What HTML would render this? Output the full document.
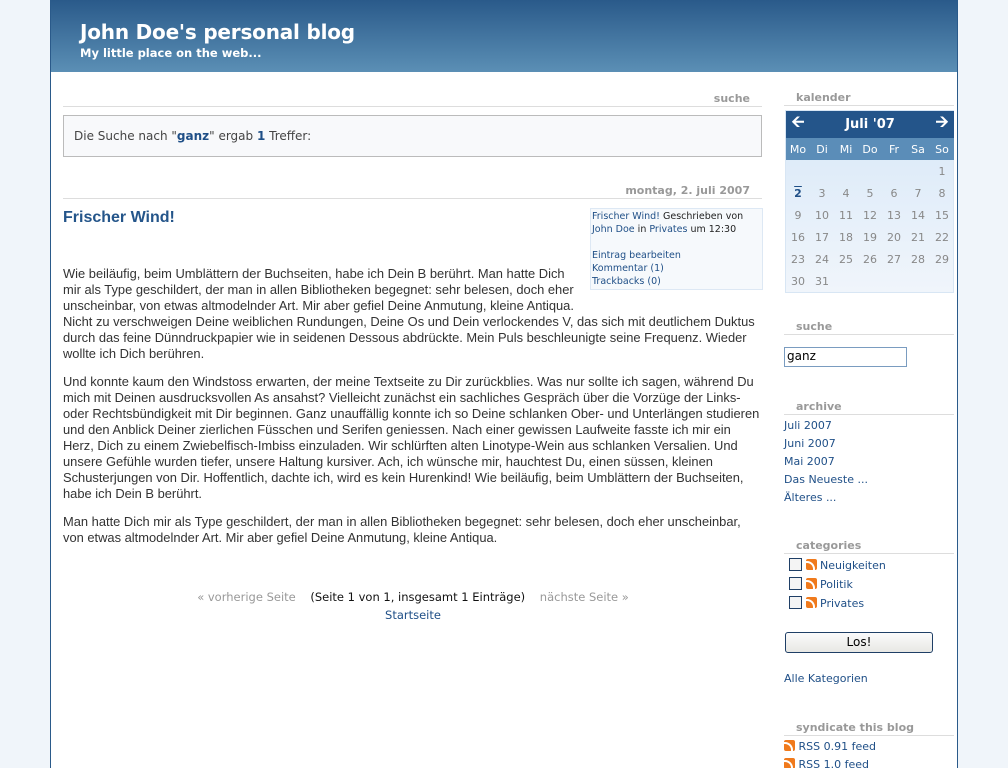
<!DOCTYPE html>
<html><head><meta charset="utf-8"><style>
*{margin:0;padding:0;box-sizing:border-box}
html,body{width:1008px;height:768px;overflow:hidden}
body{background:#f0f5fa;font-family:"DejaVu Sans","Liberation Sans",sans-serif;font-size:11px;color:#333;position:relative}
#wrap{position:absolute;left:50px;top:0;width:908px;height:768px;background:#fff;border-left:1px solid #2a5a8a;border-right:1px solid #2a5a8a}
#hd{position:absolute;left:0;top:0;width:906px;height:72px;background:linear-gradient(#2a5a8a,#5b8fb5);color:#fff}
#hd h1{position:absolute;left:29px;top:20px;font-size:20px;font-weight:bold;letter-spacing:-0.2px}
#hd h2{position:absolute;left:29px;top:46px;font-size:11.5px;font-weight:bold}
.a{position:absolute}
.sh{position:absolute;font-weight:bold;color:#999;font-size:11px;border-bottom:1px solid #ddd;line-height:14px}
a,.lk{color:#1f4f87;text-decoration:none}
.body{font-family:"Liberation Sans",Arial,sans-serif;font-size:12.9px;line-height:16px;color:#333}
table.cal{border-collapse:collapse;width:168px}
table.cal td{text-align:center;height:22px;font-size:11px;color:#888;width:24px}
.rss{display:inline-block;width:11px;height:11px;background:#f07a1c;border-radius:2px;vertical-align:-1px;position:relative;overflow:hidden}
.rss:after{content:"";position:absolute;left:-7px;bottom:-7px;width:12px;height:12px;border:2px solid #fff;border-radius:50%}
.cb{display:inline-block;width:13px;height:13px;border:1px solid #1f3f66;background:#f4f4f4;vertical-align:-2px}
</style></head><body>
<div id="wrap">
<div id="hd"><h1>John Doe's personal blog</h1><h2>My little place on the web...</h2></div>

<div class="sh" style="left:12px;top:92px;width:699px;text-align:right;padding-right:12px">suche</div>
<div class="a" style="left:12px;top:115px;width:699px;height:42px;border:1px solid #bbb;background:#f8f9fb;padding:13px 10px;font-size:12px;color:#444">Die Suche nach "<b class="lk">ganz</b>" ergab <b class="lk">1</b> Treffer:</div>

<div class="sh" style="left:12px;top:184px;width:699px;text-align:right;padding-right:12px">montag, 2. juli 2007</div>
<div class="a" style="left:12px;top:209px;font-family:'Liberation Sans',Arial,sans-serif;font-size:16px;color:#24558a;font-weight:bold">Frischer Wind!</div>
<div class="a" style="left:539px;top:208px;width:173px;height:82px;border:1px solid #dde8f4;background:#f6f9fc;font-size:9.5px;line-height:13px;padding:1px 0 0 1px;color:#222"><span class="lk">Frischer Wind!</span> Geschrieben von <span class="lk">John Doe</span> in <span class="lk">Privates</span> um 12:30<br><br><span class="lk">Eintrag bearbeiten</span><br><span class="lk">Kommentar (1)</span><br><span class="lk">Trackbacks (0)</span></div>

<div class="a body" style="left:12px;top:266px;width:700px">
<p style="margin-bottom:12px"><span style="float:right;width:180px;height:44px"></span>Wie beiläufig, beim Umblättern der Buchseiten, habe ich Dein B berührt. Man hatte Dich mir als Type geschildert, der man in allen Bibliotheken begegnet: sehr belesen, doch eher unscheinbar, von etwas altmodelnder Art. Mir aber gefiel Deine Anmutung, kleine Antiqua. Nicht zu verschweigen Deine weiblichen Rundungen, Deine Os und Dein verlockendes V, das sich mit deutlichem Duktus durch das feine Dünndruckpapier wie in seidenen Dessous abdrückte. Mein Puls beschleunigte seine Frequenz. Wieder wollte ich Dich berühren.</p>
<p style="margin-bottom:12px">Und konnte kaum den Windstoss erwarten, der meine Textseite zu Dir zurückblies. Was nur sollte ich sagen, während Du mich mit Deinen ausdrucksvollen As ansahst? Vielleicht zunächst ein sachliches Gespräch über die Vorzüge der Links- oder Rechtsbündigkeit mit Dir beginnen. Ganz unauffällig konnte ich so Deine schlanken Ober- und Unterlängen studieren und den Anblick Deiner zierlichen Füsschen und Serifen geniessen. Nach einer gewissen Laufweite fasste ich mir ein Herz, Dich zu einem Zwiebelfisch-Imbiss einzuladen. Wir schlürften alten Linotype-Wein aus schlanken Versalien. Und unsere Gefühle wurden tiefer, unsere Haltung kursiver. Ach, ich wünsche mir, hauchtest Du, einen süssen, kleinen Schusterjungen von Dir. Hoffentlich, dachte ich, wird es kein Hurenkind! Wie beiläufig, beim Umblättern der Buchseiten, habe ich Dein B berührt.</p>
<p>Man hatte Dich mir als Type geschildert, der man in allen Bibliotheken begegnet: sehr belesen, doch eher unscheinbar, von etwas altmodelnder Art. Mir aber gefiel Deine Anmutung, kleine Antiqua.</p>
</div>

<div class="a" style="left:12px;top:588px;width:700px;text-align:center;font-size:11.5px;line-height:18px;color:#111"><span style="color:#999">« vorherige Seite</span>&nbsp;&nbsp;&nbsp; (Seite 1 von 1, insgesamt 1 Einträge) &nbsp;&nbsp;&nbsp;<span style="color:#999">nächste Seite »</span><br><span class="lk">Startseite</span></div>

<div class="sh" style="left:733px;top:91px;width:170px;padding-left:12px">kalender</div>
<div class="a" style="left:734px;top:110px;width:169px;border:1px solid #d8e6f4;background:linear-gradient(#d8e8f8,#f0f5fb)">
<table class="cal">
<tr style="background:#24558a"><td style="color:#fff;font-size:16px;font-weight:bold">&#129128;</td><td colspan="5" style="color:#fff;font-weight:bold;font-size:13px">Juli '07</td><td style="color:#fff;font-size:16px;font-weight:bold">&#129130;</td></tr>
<tr style="background:#5b8db8"><td style="color:#fff">Mo</td><td style="color:#fff">Di</td><td style="color:#fff">Mi</td><td style="color:#fff">Do</td><td style="color:#fff">Fr</td><td style="color:#fff">Sa</td><td style="color:#fff">So</td></tr>
<tr><td></td><td></td><td></td><td></td><td></td><td></td><td>1</td></tr>
<tr><td style="color:#1f4f87;font-weight:bold;text-decoration:overline">2</td><td>3</td><td>4</td><td>5</td><td>6</td><td>7</td><td>8</td></tr>
<tr><td>9</td><td>10</td><td>11</td><td>12</td><td>13</td><td>14</td><td>15</td></tr>
<tr><td>16</td><td>17</td><td>18</td><td>19</td><td>20</td><td>21</td><td>22</td></tr>
<tr><td>23</td><td>24</td><td>25</td><td>26</td><td>27</td><td>28</td><td>29</td></tr>
<tr><td>30</td><td>31</td><td></td><td></td><td></td><td></td><td></td></tr>
</table></div>

<div class="sh" style="left:733px;top:320px;width:170px;padding-left:12px">suche</div>
<div class="a" style="left:733px;top:347px;width:123px;height:20px;border:1px solid #7a9cc0;font-size:12px;padding:1px 2px;color:#000">ganz</div>

<div class="sh" style="left:733px;top:400px;width:170px;padding-left:12px">archive</div>
<div class="a" style="left:733px;top:417px;font-size:11px;line-height:18px"><span class="lk">Juli 2007</span><br><span class="lk">Juni 2007</span><br><span class="lk">Mai 2007</span><br><span class="lk">Das Neueste ...</span><br><span class="lk">Älteres ...</span></div>

<div class="sh" style="left:733px;top:539px;width:170px;padding-left:12px">categories</div>
<div class="a" style="left:738px;top:556px;font-size:11px;line-height:19px">
<div><span class="cb"></span> <span class="rss"></span> <span class="lk">Neuigkeiten</span></div>
<div><span class="cb"></span> <span class="rss"></span> <span class="lk">Politik</span></div>
<div><span class="cb"></span> <span class="rss"></span> <span class="lk">Privates</span></div>
</div>
<div class="a" style="left:734px;top:632px;width:148px;height:21px;border:1px solid #1f3f66;border-radius:3px;background:linear-gradient(#fbfbfb,#e8e8e4);text-align:center;font-size:12px;line-height:19px;color:#000">Los!</div>
<div class="a lk" style="left:733px;top:672px;font-size:11px">Alle Kategorien</div>

<div class="sh" style="left:733px;top:721px;width:170px;padding-left:12px">syndicate this blog</div>
<div class="a" style="left:733px;top:738px;font-size:11px;line-height:18px">
<div><span class="rss"></span> <span class="lk">RSS 0.91 feed</span></div>
<div><span class="rss"></span> <span class="lk">RSS 1.0 feed</span></div>
</div>
</div>
</body></html>
